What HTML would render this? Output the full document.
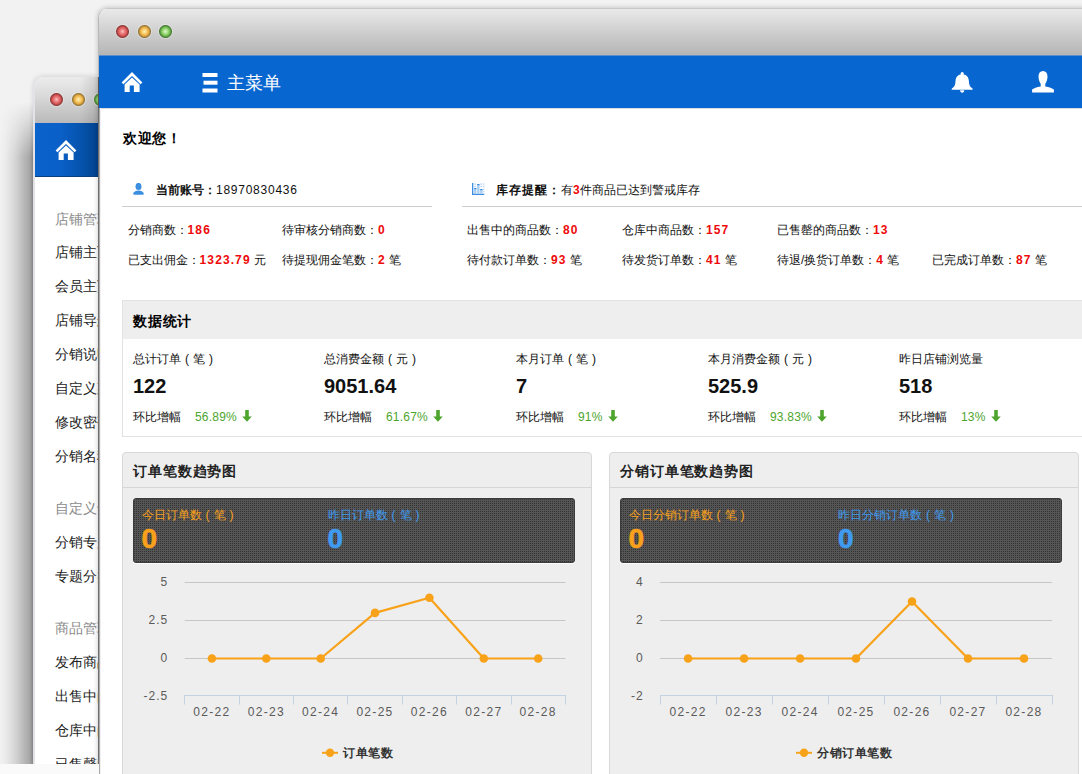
<!DOCTYPE html>
<html><head><meta charset="utf-8">
<style>
*{margin:0;padding:0;box-sizing:border-box}
html,body{width:1082px;height:774px;overflow:hidden;background:#f2f2f2;font-family:"Liberation Sans",sans-serif;color:#000}
div,svg{position:absolute}
#bshadow{left:0;top:77px;width:34px;height:687px;background:linear-gradient(to right,rgba(0,0,0,0) 0,rgba(0,0,0,.03) 6px,rgba(0,0,0,.13) 16px,rgba(0,0,0,.24) 24px,rgba(0,0,0,.31) 30px,rgba(0,0,0,.42) 33px);-webkit-mask-image:linear-gradient(to bottom,transparent 0,transparent 25px,rgba(0,0,0,.35) 45px,#000 80px);border-top-left-radius:10px}
#bstrip{left:0;top:764px;width:99px;height:10px;background:#fafafa}
#bwin{left:33px;top:77px;width:66px;height:686.5px;background:#fff;border-top-left-radius:10px;overflow:hidden;border-left:2px solid #e2e3e7;box-shadow:0 -1px 5px rgba(0,0,0,.13)}
#bwin .title{left:0;top:0;width:100%;height:46px;background:linear-gradient(to right,rgba(0,0,0,0) 70%,rgba(0,0,0,.12) 100%),linear-gradient(#ececec,#dadada 40%,#b9b9b9)}
#bwin .hdr{left:0;top:46px;width:100%;height:54px;background:linear-gradient(to right,#0a62cb 0,#0a60c8 40%,#0552aa 75%,#03418c 100%);border-bottom:1px solid #0a3f80}
.light{width:13px;height:13px;border-radius:50%;box-shadow:0 0 0 1px rgba(255,250,240,.35)}
.lr{background:radial-gradient(circle closest-side at 50% 50%,#fbc4c4 0,#ec8080 35%,#dc5c5c 62%,#a03a3a 88%,#6a2424 100%)}
.ly{background:radial-gradient(circle closest-side at 50% 50%,#fff0b8 0,#f8d070 35%,#eab04a 62%,#a88030 88%,#6e5418 100%)}
.lg{background:radial-gradient(circle closest-side at 50% 50%,#def8cc 0,#a8e088 35%,#7cc25a 62%,#4a8a34 88%,#2e5a20 100%)}
.mi{left:20px;font-size:14px;line-height:20px;color:#222;white-space:nowrap}
.mi.g{color:#8a8a8a}
#fedge{left:98px;top:108px;width:3px;height:670px;background:linear-gradient(to right,#5a5a5a,#8c8c8c 40%,#e6e6ea 70%,#fff)}
#fwin{left:98px;top:8px;width:1000px;height:800px;background:#fff;border-top-left-radius:10px;overflow:hidden;border-left:1px solid #b8b8b8;box-shadow:-1px -1px 4px rgba(0,0,0,.16)}
#fwin .title{left:0;top:0;width:100%;height:47px;background:linear-gradient(#e9e9e9,#dcdcdc 25%,#c4c4c4 70%,#b5b5b5);border-top:1px solid #c8c8c8}
#fwin .hdr{left:0;top:47px;width:100%;height:53px;background:#0766cf;border-top:1px solid #5d8fd0}
#fwin .hline{left:0;top:100px;width:100%;height:1px;background:#dadde2}
.t12{font-size:12px;line-height:20px;white-space:nowrap;color:#111}
.red{color:#ee0a0a;font-weight:bold;font-size:12px;letter-spacing:1.1px}
.big{font-size:20px;line-height:30px;font-weight:bold;color:#111}
.pct{font-size:12px;line-height:20px;color:#4ea52e;white-space:nowrap;letter-spacing:0.2px}
.pl{display:inline-block;width:12px;text-align:center}
.arr{position:relative;display:inline-block;vertical-align:-1px;margin-left:5px}
.panel{top:452px;width:470px;height:400px;background:#eeeeee;border:1px solid #d8d8d8;border-radius:4px}
.ptitle{top:460.5px;font-size:14px;line-height:20px;font-weight:bold;color:#222;letter-spacing:0.9px;white-space:nowrap}
.panel::after{content:"";position:absolute;left:0;right:0;top:34px;height:1px;background:#d6d6d6}
.dark{top:498px;width:441.5px;height:64.5px;border-radius:3px;border:1px solid #3c3c3c;background-color:#333;background-image:repeating-linear-gradient(to right,transparent 0 1px,#555 1px 2px),repeating-linear-gradient(to bottom,transparent 0 1px,#555 1px 2px);box-shadow:0 1px 0 #fafafa}
.lab{top:504.5px;font-size:12px;line-height:20px;white-space:nowrap}
.o{color:#f9a11b}
.b{color:#3f9bf0}
.zero{top:524px;font-size:28px;line-height:30px;font-weight:bold;-webkit-text-stroke:0.7px currentColor}
.csvg{left:0;top:0}
.yl{font-size:12px;line-height:20px;color:#5a5a5a;text-align:right;letter-spacing:1px;white-space:nowrap}
.xl{width:60px;text-align:center;font-size:12px;line-height:20px;color:#5a5a5a;letter-spacing:1.3px;white-space:nowrap}
.legend{top:742.5px;font-size:12px;line-height:20px;font-weight:bold;color:#333;letter-spacing:0.5px;white-space:nowrap}
</style></head><body>
<div id="bshadow"></div>
<div id="bwin">
  <div class="title"></div>
  <div class="light lr" style="left:14.5px;top:15.5px"></div>
  <div class="light ly" style="left:36.5px;top:15.5px"></div>
  <div class="light lg" style="left:58.5px;top:15.5px"></div>
  <div class="hdr"></div>
  <svg style="left:19.5px;top:62px" width="22" height="21" viewBox="0 0 22 21"><path d="M11 1.1 L0.6 11.4 L2.4 13.2 L11 5.1 L19.6 13.2 L21.4 11.4 Z" fill="#fff"/><path d="M3.6 13.6 L11 6.6 L18.6 13.6 V21 H12.9 V14.4 H8.7 V21 H3.6 Z" fill="#fff"/></svg>
<div class="mi g" style="top:131.5px">店铺管理</div>
<div class="mi" style="top:165.0px">店铺主页</div>
<div class="mi" style="top:199.0px">会员主页</div>
<div class="mi" style="top:233.0px">店铺导航</div>
<div class="mi" style="top:267.0px">分销说明</div>
<div class="mi" style="top:301.0px">自定义菜单</div>
<div class="mi" style="top:335.0px">修改密码</div>
<div class="mi" style="top:369.0px">分销名称</div>
<div class="mi g" style="top:421.0px">自定义专题</div>
<div class="mi" style="top:455.0px">分销专题</div>
<div class="mi" style="top:489.0px">专题分类</div>
<div class="mi g" style="top:541.0px">商品管理</div>
<div class="mi" style="top:575.0px">发布商品</div>
<div class="mi" style="top:609.0px">出售中的商品</div>
<div class="mi" style="top:643.0px">仓库中的商品</div>
<div class="mi" style="top:677.0px">已售罄的商品</div>
</div>
<div id="fwin">
  <div class="title"></div>
  <div class="light lr" style="left:16.5px;top:16.5px"></div>
  <div class="light ly" style="left:38.5px;top:16.5px"></div>
  <div class="light lg" style="left:59.5px;top:16.5px"></div>
  <div class="hdr"></div>
  <div class="hline"></div>
</div>
<div id="fedge"></div>
<div style="left:98px;top:77px;width:1px;height:31px;background:#555"></div>
<svg style="left:120.5px;top:71px" width="22" height="21" viewBox="0 0 22 21"><path d="M11 1.1 L0.6 11.4 L2.4 13.2 L11 5.1 L19.6 13.2 L21.4 11.4 Z" fill="#fff"/><path d="M3.6 13.6 L11 6.6 L18.6 13.6 V21 H12.9 V14.4 H8.7 V21 H3.6 Z" fill="#fff"/></svg>
<svg style="left:202px;top:72.5px" width="16" height="20" viewBox="0 0 16 20"><rect x="0.5" y="0" width="15" height="4" fill="#fff"/><rect x="1.5" y="7.7" width="14" height="4" fill="#fff"/><rect x="0.5" y="15.5" width="15" height="4" fill="#fff"/></svg>
<div style="left:227px;top:68px;font-size:18px;line-height:30px;color:#fff;white-space:nowrap">主菜单</div>
<svg style="left:950.5px;top:72px" width="22" height="22" viewBox="0 0 22 22"><circle cx="11.2" cy="1.7" r="1.6" fill="#fff"/><path d="M11.2 2.2C15.6 2.2 17.7 5.2 17.9 9.2C18.1 12.6 18.7 14.5 20.6 15.8C21.7 16.5 21.9 17.2 21.6 17.8H0.8C0.5 17.2 0.7 16.5 1.8 15.8C3.7 14.5 4.3 12.6 4.5 9.2C4.7 5.2 6.8 2.2 11.2 2.2Z" fill="#fff"/><path d="M9.1 18.3H13.3C13.3 19.8 12.4 20.7 11.2 20.7S9.1 19.8 9.1 18.3Z" fill="#fff"/></svg>
<svg style="left:1031.5px;top:70.5px" width="22" height="22" viewBox="0 0 22 22"><path d="M11 0C13.9 0 15.5 2.1 15.5 5.4C15.5 8.4 14.4 11.2 13.3 12.7V15.4C17.1 15.9 20.6 17.1 21.9 18.6V21.6H0.1V18.6C1.4 17.1 4.9 15.9 8.7 15.4V12.7C7.6 11.2 6.5 8.4 6.5 5.4C6.5 2.1 8.1 0 11 0Z" fill="#fff"/></svg>

<div style="left:123px;top:127.5px;font-size:14px;line-height:20px;font-weight:bold;letter-spacing:0.7px;white-space:nowrap">欢迎您！</div>
<svg style="left:132.5px;top:183px" width="11" height="12" viewBox="0 0 11 12"><ellipse cx="5.5" cy="3.4" rx="3" ry="3.5" fill="#3b8ee0"/><path d="M0 11.2C0.5 9 2.6 7.6 5.5 7.6S10.5 9 11 11.2C10 12 1 12 0 11.2z" fill="#3b8ee0"/></svg>
<div class="t12" style="left:156px;top:180px"><b>当前账号：</b><span style="letter-spacing:0.75px">18970830436</span></div>
<div style="left:122px;top:206px;width:310px;height:1px;background:#cdcdcd"></div>
<div style="left:462px;top:206px;width:640px;height:1px;background:#cdcdcd"></div>
<svg style="left:472px;top:183px" width="13" height="12" viewBox="0 0 13 12"><rect x="0" y="0" width="1.3" height="12" fill="#3b8ee0"/><rect x="0" y="10.7" width="12.3" height="1.3" fill="#3b8ee0"/><rect x="2.1" y="5" width="2.3" height="5.7" fill="#a8ccf0"/><rect x="5.2" y="1" width="2.3" height="9.7" fill="#a8ccf0"/><rect x="8.2" y="6" width="2.3" height="4.7" fill="#a8ccf0"/><rect x="2.1" y="5" width="2.3" height="1.2" fill="#3b8ee0"/><rect x="5.2" y="1" width="2.3" height="1.2" fill="#3b8ee0"/><rect x="8.2" y="6" width="2.3" height="1.2" fill="#3b8ee0"/><g fill="#b8d6f4"><rect x="2.3" y="0.4" width="1.6" height="1.4"/><rect x="8.4" y="0.4" width="1.6" height="1.4"/><rect x="11" y="0.4" width="1.4" height="1.4"/><rect x="2.3" y="2.8" width="1.6" height="1.4"/><rect x="8.4" y="2.8" width="1.6" height="1.4"/><rect x="11" y="2.8" width="1.4" height="1.4"/><rect x="11" y="5.6" width="1.4" height="1.4"/><rect x="11" y="8" width="1.4" height="1.4"/></g></svg>
<div class="t12" style="left:496px;top:180px"><b style="letter-spacing:1px">库存提醒：</b>有<b class="red" style="letter-spacing:0">3</b>件商品已达到警戒库存</div>
<div class="t12" style="left:127.6px;top:220px">分销商数：<b class="red">186</b></div>
<div class="t12" style="left:282px;top:220px">待审核分销商数：<b class="red">0</b></div>
<div class="t12" style="left:467px;top:220px">出售中的商品数：<b class="red">80</b></div>
<div class="t12" style="left:622px;top:220px">仓库中商品数：<b class="red">157</b></div>
<div class="t12" style="left:777px;top:220px">已售罄的商品数：<b class="red">13</b></div>
<div class="t12" style="left:127.6px;top:250px">已支出佣金：<b class="red">1323.79</b> 元</div>
<div class="t12" style="left:282px;top:250px">待提现佣金笔数：<b class="red">2</b> 笔</div>
<div class="t12" style="left:467px;top:250px">待付款订单数：<b class="red">93</b> 笔</div>
<div class="t12" style="left:622px;top:250px">待发货订单数：<b class="red">41</b> 笔</div>
<div class="t12" style="left:777px;top:250px">待退/换货订单数：<b class="red">4</b> 笔</div>
<div class="t12" style="left:932px;top:250px">已完成订单数：<b class="red">87</b> 笔</div>

<div style="left:122px;top:300px;width:980px;height:137px;border:1px solid #e2e2e2;background:#fff"></div>
<div style="left:123px;top:301px;width:980px;height:37.5px;background:#eeeeee"></div>
<div style="left:133px;top:310.5px;font-size:14px;line-height:20px;font-weight:bold;letter-spacing:0.8px;white-space:nowrap">数据统计</div>
<div class="t12" style="left:133px;top:349px">总计订单<span class="pl">(</span>笔<span class="pl">)</span></div>
<div class="big" style="left:133px;top:371px">122</div>
<div class="t12" style="left:133px;top:407px">环比增幅</div>
<div class="pct" style="left:195px;top:407px">56.89%<svg class="arr" width="10" height="12" viewBox="0 0 10 12"><path d="M3.2 0h3.6v6.5h3L5 11.8 0.2 6.5h3z" fill="#4ea52e"/></svg></div>
<div class="t12" style="left:324px;top:349px">总消费金额<span class="pl">(</span>元<span class="pl">)</span></div>
<div class="big" style="left:324px;top:371px">9051.64</div>
<div class="t12" style="left:324px;top:407px">环比增幅</div>
<div class="pct" style="left:386px;top:407px">61.67%<svg class="arr" width="10" height="12" viewBox="0 0 10 12"><path d="M3.2 0h3.6v6.5h3L5 11.8 0.2 6.5h3z" fill="#4ea52e"/></svg></div>
<div class="t12" style="left:516px;top:349px">本月订单<span class="pl">(</span>笔<span class="pl">)</span></div>
<div class="big" style="left:516px;top:371px">7</div>
<div class="t12" style="left:516px;top:407px">环比增幅</div>
<div class="pct" style="left:578px;top:407px">91%<svg class="arr" width="10" height="12" viewBox="0 0 10 12"><path d="M3.2 0h3.6v6.5h3L5 11.8 0.2 6.5h3z" fill="#4ea52e"/></svg></div>
<div class="t12" style="left:708px;top:349px">本月消费金额<span class="pl">(</span>元<span class="pl">)</span></div>
<div class="big" style="left:708px;top:371px">525.9</div>
<div class="t12" style="left:708px;top:407px">环比增幅</div>
<div class="pct" style="left:770px;top:407px">93.83%<svg class="arr" width="10" height="12" viewBox="0 0 10 12"><path d="M3.2 0h3.6v6.5h3L5 11.8 0.2 6.5h3z" fill="#4ea52e"/></svg></div>
<div class="t12" style="left:899px;top:349px">昨日店铺浏览量</div>
<div class="big" style="left:899px;top:371px">518</div>
<div class="t12" style="left:899px;top:407px">环比增幅</div>
<div class="pct" style="left:961px;top:407px">13%<svg class="arr" width="10" height="12" viewBox="0 0 10 12"><path d="M3.2 0h3.6v6.5h3L5 11.8 0.2 6.5h3z" fill="#4ea52e"/></svg></div>

<div class="panel" style="left:122px"></div>
<div class="ptitle" style="left:133px">订单笔数趋势图</div>
<div class="dark" style="left:133px"></div>
<div class="lab o" style="left:141.5px">今日订单数<span class="pl">(</span>笔<span class="pl">)</span></div>
<div class="zero o" style="left:141.5px">0</div>
<div class="lab b" style="left:327.5px">昨日订单数<span class="pl">(</span>笔<span class="pl">)</span></div>
<div class="zero b" style="left:327.5px">0</div>
<svg class="csvg" width="1082" height="774" viewBox="0 0 1082 774"><line x1="184.7" y1="582.5" x2="565.4" y2="582.5" stroke="#c6c6c6" stroke-width="1"/><line x1="184.7" y1="620.5" x2="565.4" y2="620.5" stroke="#c6c6c6" stroke-width="1"/><line x1="184.7" y1="658.5" x2="565.4" y2="658.5" stroke="#c6c6c6" stroke-width="1"/><line x1="184.7" y1="695.5" x2="565.4" y2="695.5" stroke="#c4d3e2" stroke-width="1"/><line x1="184.5" y1="695" x2="184.5" y2="704.5" stroke="#c4d3e2" stroke-width="1"/><line x1="239.5" y1="695" x2="239.5" y2="704.5" stroke="#c4d3e2" stroke-width="1"/><line x1="293.5" y1="695" x2="293.5" y2="704.5" stroke="#c4d3e2" stroke-width="1"/><line x1="347.5" y1="695" x2="347.5" y2="704.5" stroke="#c4d3e2" stroke-width="1"/><line x1="402.5" y1="695" x2="402.5" y2="704.5" stroke="#c4d3e2" stroke-width="1"/><line x1="456.5" y1="695" x2="456.5" y2="704.5" stroke="#c4d3e2" stroke-width="1"/><line x1="511.5" y1="695" x2="511.5" y2="704.5" stroke="#c4d3e2" stroke-width="1"/><line x1="565.5" y1="695" x2="565.5" y2="704.5" stroke="#c4d3e2" stroke-width="1"/><polyline fill="none" stroke="#f8a21a" stroke-width="2.2" stroke-linejoin="round" points="211.9,658.5 266.3,658.5 320.7,658.5 375.0,612.9 429.4,597.7 483.8,658.5 538.2,658.5"/><circle cx="211.9" cy="658.5" r="4.3" fill="#f8a21a"/><circle cx="266.3" cy="658.5" r="4.3" fill="#f8a21a"/><circle cx="320.7" cy="658.5" r="4.3" fill="#f8a21a"/><circle cx="375.0" cy="612.9" r="4.3" fill="#f8a21a"/><circle cx="429.4" cy="597.7" r="4.3" fill="#f8a21a"/><circle cx="483.8" cy="658.5" r="4.3" fill="#f8a21a"/><circle cx="538.2" cy="658.5" r="4.3" fill="#f8a21a"/><line x1="322" y1="752.8" x2="338" y2="752.8" stroke="#f8a21a" stroke-width="2"/><circle cx="330" cy="752.8" r="4.2" fill="#f8a21a"/></svg>
<div class="yl" style="right:913.8px;top:572.1px">5</div><div class="yl" style="right:913.8px;top:610.0px">2.5</div><div class="yl" style="right:913.8px;top:648.1px">0</div><div class="yl" style="right:913.8px;top:685.5px">-2.5</div><div class="xl" style="left:181.9px;top:702px">02-22</div><div class="xl" style="left:236.3px;top:702px">02-23</div><div class="xl" style="left:290.7px;top:702px">02-24</div><div class="xl" style="left:345.0px;top:702px">02-25</div><div class="xl" style="left:399.4px;top:702px">02-26</div><div class="xl" style="left:453.8px;top:702px">02-27</div><div class="xl" style="left:508.2px;top:702px">02-28</div>
<div class="legend" style="left:343px">订单笔数</div>
<div class="panel" style="left:609px"></div>
<div class="ptitle" style="left:620px">分销订单笔数趋势图</div>
<div class="dark" style="left:620px"></div>
<div class="lab o" style="left:628.5px">今日分销订单数<span class="pl">(</span>笔<span class="pl">)</span></div>
<div class="zero o" style="left:628.5px">0</div>
<div class="lab b" style="left:838.0px">昨日分销订单数<span class="pl">(</span>笔<span class="pl">)</span></div>
<div class="zero b" style="left:838.0px">0</div>
<svg class="csvg" width="1082" height="774" viewBox="0 0 1082 774"><line x1="660.1" y1="582.5" x2="1052" y2="582.5" stroke="#c6c6c6" stroke-width="1"/><line x1="660.1" y1="620.5" x2="1052" y2="620.5" stroke="#c6c6c6" stroke-width="1"/><line x1="660.1" y1="658.5" x2="1052" y2="658.5" stroke="#c6c6c6" stroke-width="1"/><line x1="660.1" y1="695.5" x2="1052" y2="695.5" stroke="#c4d3e2" stroke-width="1"/><line x1="660.5" y1="695" x2="660.5" y2="704.5" stroke="#c4d3e2" stroke-width="1"/><line x1="716.5" y1="695" x2="716.5" y2="704.5" stroke="#c4d3e2" stroke-width="1"/><line x1="772.5" y1="695" x2="772.5" y2="704.5" stroke="#c4d3e2" stroke-width="1"/><line x1="828.5" y1="695" x2="828.5" y2="704.5" stroke="#c4d3e2" stroke-width="1"/><line x1="884.5" y1="695" x2="884.5" y2="704.5" stroke="#c4d3e2" stroke-width="1"/><line x1="940.5" y1="695" x2="940.5" y2="704.5" stroke="#c4d3e2" stroke-width="1"/><line x1="996.5" y1="695" x2="996.5" y2="704.5" stroke="#c4d3e2" stroke-width="1"/><line x1="1052.5" y1="695" x2="1052.5" y2="704.5" stroke="#c4d3e2" stroke-width="1"/><polyline fill="none" stroke="#f8a21a" stroke-width="2.2" stroke-linejoin="round" points="688.1,658.5 744.1,658.5 800.1,658.5 856.0,658.5 912.0,601.5 968.0,658.5 1024.0,658.5"/><circle cx="688.1" cy="658.5" r="4.3" fill="#f8a21a"/><circle cx="744.1" cy="658.5" r="4.3" fill="#f8a21a"/><circle cx="800.1" cy="658.5" r="4.3" fill="#f8a21a"/><circle cx="856.0" cy="658.5" r="4.3" fill="#f8a21a"/><circle cx="912.0" cy="601.5" r="4.3" fill="#f8a21a"/><circle cx="968.0" cy="658.5" r="4.3" fill="#f8a21a"/><circle cx="1024.0" cy="658.5" r="4.3" fill="#f8a21a"/><line x1="796" y1="752.8" x2="812" y2="752.8" stroke="#f8a21a" stroke-width="2"/><circle cx="804" cy="752.8" r="4.2" fill="#f8a21a"/></svg>
<div class="yl" style="right:438.4px;top:572.1px">4</div><div class="yl" style="right:438.4px;top:610.0px">2</div><div class="yl" style="right:438.4px;top:648.1px">0</div><div class="yl" style="right:438.4px;top:685.5px">-2</div><div class="xl" style="left:658.1px;top:702px">02-22</div><div class="xl" style="left:714.1px;top:702px">02-23</div><div class="xl" style="left:770.1px;top:702px">02-24</div><div class="xl" style="left:826.0px;top:702px">02-25</div><div class="xl" style="left:882.0px;top:702px">02-26</div><div class="xl" style="left:938.0px;top:702px">02-27</div><div class="xl" style="left:994.0px;top:702px">02-28</div>
<div class="legend" style="left:817px">分销订单笔数</div>
<div id="bstrip"></div>
</body></html>
